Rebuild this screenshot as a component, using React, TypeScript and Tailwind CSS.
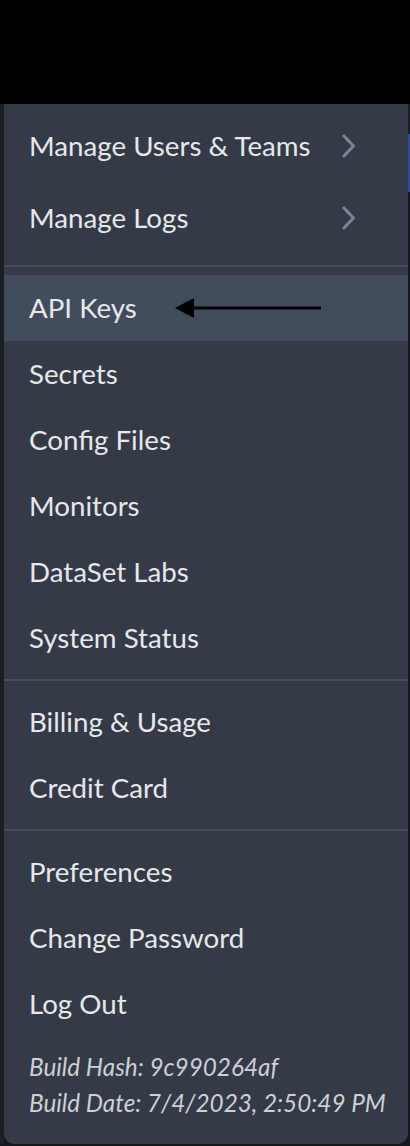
import React from 'react';

type Item = { label: string; sub?: boolean; active?: boolean };

const groups: Item[][] = [
  [
    { label: 'API Keys', active: true },
    { label: 'Secrets' },
    { label: 'Config Files' },
    { label: 'Monitors' },
    { label: 'DataSet Labs' },
    { label: 'System Status' },
  ],
  [{ label: 'Billing & Usage' }, { label: 'Credit Card' }],
  [{ label: 'Preferences' }, { label: 'Change Password' }, { label: 'Log Out' }],
];

function Chevron() {
  return (
    <svg width="16" height="26" viewBox="0 0 16 26" fill="none" className="shrink-0">
      <path d="M3 3l9.5 10L3 23" stroke="#7b8496" strokeWidth="3" strokeLinecap="square" />
    </svg>
  );
}

function Divider() {
  return <div className="h-[2px] bg-[#474e5a]" />;
}

function MenuRow({ item, tall }: { item: Item; tall?: boolean }) {
  return (
    <div
      className={`relative flex items-center justify-between pl-[25px] pr-[51px] ${tall ? 'h-[72px]' : 'h-[66px]'} ${
        item.active ? 'bg-[#434c5d]' : ''
      }`}
    >
      <span className="text-[27.7px] text-[#e6e8eb]">{item.label}</span>
      {item.sub && <Chevron />}
      {item.active && (
        // annotation arrow pointing at the active row
        <svg
          className="absolute left-[168px] top-1/2 -translate-y-1/2"
          width="152"
          height="24"
          viewBox="0 0 152 24"
        >
          <path d="M3 12L22 2v20z" fill="#000" />
          <rect x="18" y="10.5" width="131" height="3" fill="#000" />
        </svg>
      )}
    </div>
  );
}

export default function App() {
  return (
    <div
      className="w-[410px] h-[1146px] bg-[#15171b] overflow-hidden flex flex-col"
      style={{ fontFamily: 'Lato, "Noto Sans", sans-serif' }}
    >
      <div className="h-[104px] bg-black shrink-0" />
      <div className="relative flex">
        {/* page behind the menu */}
        <div className="w-[4px] bg-[#1b1e23]" />
        <div className="w-[404px] bg-[#343a46] rounded-b-[10px] h-[1040px] flex flex-col">
          <div className="pt-[6px] pb-[11px]">
            <MenuRow item={{ label: 'Manage Users & Teams', sub: true }} tall />
            <MenuRow item={{ label: 'Manage Logs', sub: true }} tall />
          </div>
          {groups.map((g, i) => (
            <React.Fragment key={i}>
              <Divider />
              <div className="py-[8px]">
                {g.map((item) => (
                  <MenuRow key={item.label} item={item} />
                ))}
              </div>
            </React.Fragment>
          ))}
          <div className="-mt-[8px] pt-[12px] pl-[25px] text-[24.3px] leading-[36px] italic text-[#ccd0d6]">
            <div>Build Hash: 9c990264af</div>
            <div>Build Date: 7/4/2023, 2:50:49 PM</div>
          </div>
        </div>
        <div className="w-[2px] flex flex-col">
          <div className="h-[30px] bg-[#1b1e23]" />
          <div className="h-[58px] bg-[#2d47a8]" />
          <div className="flex-1 bg-[#16181c]" />
        </div>
      </div>
    </div>
  );
}
